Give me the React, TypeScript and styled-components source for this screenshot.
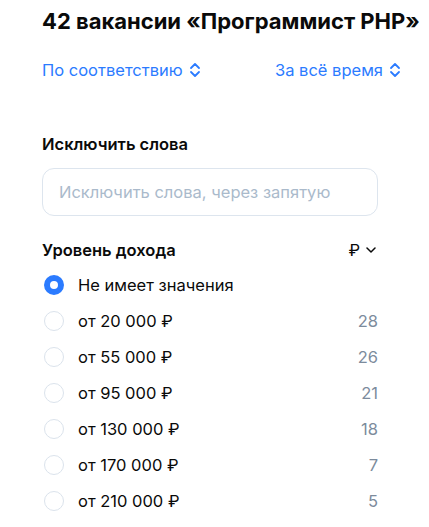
import React from "react";
import styled, { createGlobalStyle } from "styled-components";

const Global = createGlobalStyle`
  html, body { margin: 0; padding: 0; background: #fff; }
  body { font-family: Inter, "Noto Sans", Arial, sans-serif; color: #0a0a0a; }
`;

const Page = styled.div`
  width: 429px;
  height: 527px;
  overflow: hidden;
  padding: 6px 0 0 42px;
  box-sizing: border-box;
`;

const Title = styled.h1`
  margin: 0;
  font-size: 22px;
  line-height: 30px;
  font-weight: 700;
  letter-spacing: 0;
  white-space: nowrap;
  color: #0a0a0a;
`;

const SortRow = styled.div`
  display: flex;
  justify-content: space-between;
  width: 359px;
  margin-top: 24px;
`;

const SortButton = styled.button`
  display: flex;
  align-items: center;
  gap: 6px;
  padding: 0;
  border: 0;
  background: none;
  font: inherit;
  font-size: 16.5px;
  line-height: 20px;
  color: #2b7bff;
  cursor: pointer;
`;

const Content = styled.div`
  width: 336px;
`;

const Label = styled.div`
  font-size: 16.5px;
  line-height: 20px;
  font-weight: 600;
  color: #0a0a0a;
`;

const ExcludeBlock = styled.div`
  margin-top: 54px;
`;

const Input = styled.input`
  display: block;
  box-sizing: border-box;
  width: 336px;
  height: 48px;
  margin-top: 14px;
  padding: 0 16px;
  border: 1px solid #dde5ee;
  border-radius: 12px;
  font: inherit;
  font-size: 16.5px;
  color: #0a0a0a;
  outline: none;
  &::placeholder {
    color: #aabacb;
  }
`;

const IncomeHeader = styled.div`
  display: flex;
  justify-content: space-between;
  align-items: center;
  margin-top: 24px;
`;

const Currency = styled.div`
  display: flex;
  align-items: center;
  gap: 6px;
  font-size: 16.5px;
  color: #0a0a0a;
  padding-right: 2px;
`;

const List = styled.div`
  display: flex;
  flex-direction: column;
  margin-top: 7px;
`;

const Option = styled.label`
  display: flex;
  align-items: center;
  height: 36px;
  cursor: pointer;
`;

const Radio = styled.span<{ $checked?: boolean }>`
  box-sizing: border-box;
  width: 20px;
  height: 20px;
  margin-left: 2px;
  border-radius: 50%;
  flex-shrink: 0;
  border: ${(p) => (p.$checked ? "6px solid #2b7bff" : "1px solid #dbe3ec")};
  background: #fff;
`;

const OptionText = styled.span`
  margin-left: 14px;
  font-size: 16.5px;
  line-height: 20px;
  color: #0a0a0a;
  flex: 1;
`;

const Count = styled.span`
  font-size: 16.5px;
  line-height: 20px;
  color: #7c8b9c;
`;

const UpDown = () => (
  <svg width="12" height="16" viewBox="0 0 12 16" fill="none">
    <path d="M2 6l4-4 4 4M2 10l4 4 4-4" stroke="#2b7bff" strokeWidth="1.8" strokeLinecap="round" strokeLinejoin="round" />
  </svg>
);

const Chevron = () => (
  <svg width="10" height="6" viewBox="0 0 10 6" fill="none">
    <path d="M1 1l4 4 4-4" stroke="#0a0a0a" strokeWidth="1.5" strokeLinecap="round" strokeLinejoin="round" />
  </svg>
);

const options = [
  { label: "Не имеет значения", count: "", checked: true },
  { label: "от 20 000 ₽", count: "28" },
  { label: "от 55 000 ₽", count: "26" },
  { label: "от 95 000 ₽", count: "21" },
  { label: "от 130 000 ₽", count: "18" },
  { label: "от 170 000 ₽", count: "7" },
  { label: "от 210 000 ₽", count: "5" },
];

export default function App() {
  return (
    <>
      <Global />
      <Page>
        <Title>42 вакансии «Программист PHP»</Title>
        <SortRow>
          <SortButton>
            По соответствию <UpDown />
          </SortButton>
          <SortButton>
            За всё время <UpDown />
          </SortButton>
        </SortRow>
        <Content>
          <ExcludeBlock>
            <Label>Исключить слова</Label>
            <Input placeholder="Исключить слова, через запятую" />
          </ExcludeBlock>
          <IncomeHeader>
            <Label>Уровень дохода</Label>
            <Currency>
              ₽ <Chevron />
            </Currency>
          </IncomeHeader>
          <List>
            {options.map((o) => (
              <Option key={o.label}>
                <Radio $checked={o.checked} />
                <OptionText>{o.label}</OptionText>
                <Count>{o.count}</Count>
              </Option>
            ))}
          </List>
        </Content>
      </Page>
    </>
  );
}
